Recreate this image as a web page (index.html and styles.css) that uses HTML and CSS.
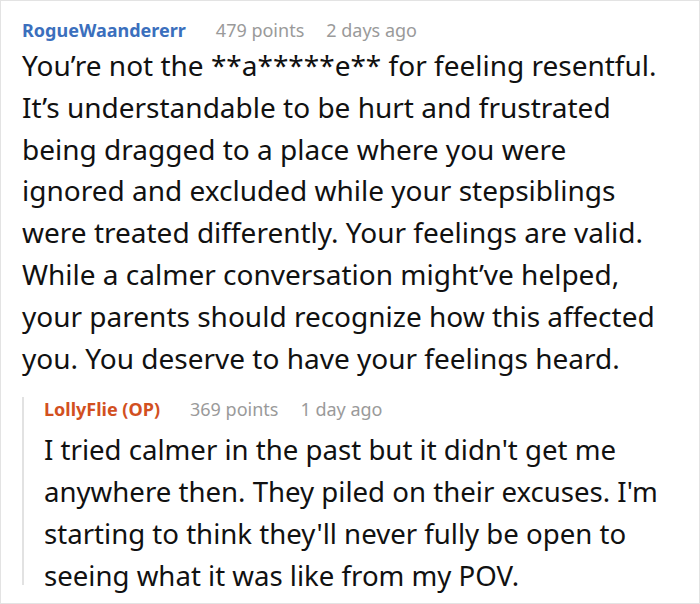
FILE: index.html
```html
<!DOCTYPE html>
<html>
<head>
<meta charset="utf-8">
<link rel="stylesheet" href="styles.css">
</head>
<body>
<div class="frame">
  <div class="comment">
    <div class="meta">
      <span class="user user-blue">RogueWaandererr</span>
      <span class="info">479 points</span>
      <span class="info">2 days ago</span>
    </div>
    <p class="text">You’re not the **a*****e** for feeling resentful. It’s understandable to be hurt and frustrated being dragged to a place where you were ignored and excluded while your stepsiblings were treated differently. Your feelings are valid. While a calmer conversation might’ve helped, your parents should recognize how this affected you. You deserve to have your feelings heard.</p>
    <div class="reply">
      <div class="meta">
        <span class="user user-orange">LollyFlie (OP)</span>
        <span class="info">369 points</span>
        <span class="info">1 day ago</span>
      </div>
      <p class="text text-reply">I tried calmer in the past but it didn't get me anywhere then. They piled on their excuses. I'm starting to think they'll never fully be open to seeing what it was like from my POV.</p>
    </div>
  </div>
</div>
</body>
</html>
```

FILE: styles.css
```css
html, body {
  margin: 0;
  padding: 0;
  background: #ffffff;
}
.frame {
  width: 700px;
  height: 604px;
  box-sizing: border-box;
  border: 1px solid #e3e3e3;
  font-family: "Noto Sans", "Open Sans", sans-serif;
  overflow: hidden;
}
.comment {
  padding: 17px 35px 0 21px;
}
.meta {
  display: flex;
  gap: 22px;
  font-size: 18px;
  line-height: 24px;
  white-space: nowrap;
}
.user {
  font-weight: 700;
  margin-right: 8px;
}
.user-blue { color: #3b6fbd; }
.user-orange { color: #d2501f; }
.info { color: #9a9a9a; }
.text {
  margin: 0;
  font-size: 28px;
  line-height: 41.8px;
  color: #111111;
}
.comment > .text {
  margin-top: 3px;
}
.reply {
  position: relative;
  margin-top: 29px;
  padding-left: 22px;
}
.reply::before {
  content: "";
  position: absolute;
  left: 0;
  top: 0;
  bottom: 12px;
  width: 2px;
  background: #e2e2e2;
}
.reply .meta {
  margin-top: -11px;
}
.text-reply {
  margin-top: 8px;
  font-size: 27.6px;
  margin-right: -20px;
}
```
